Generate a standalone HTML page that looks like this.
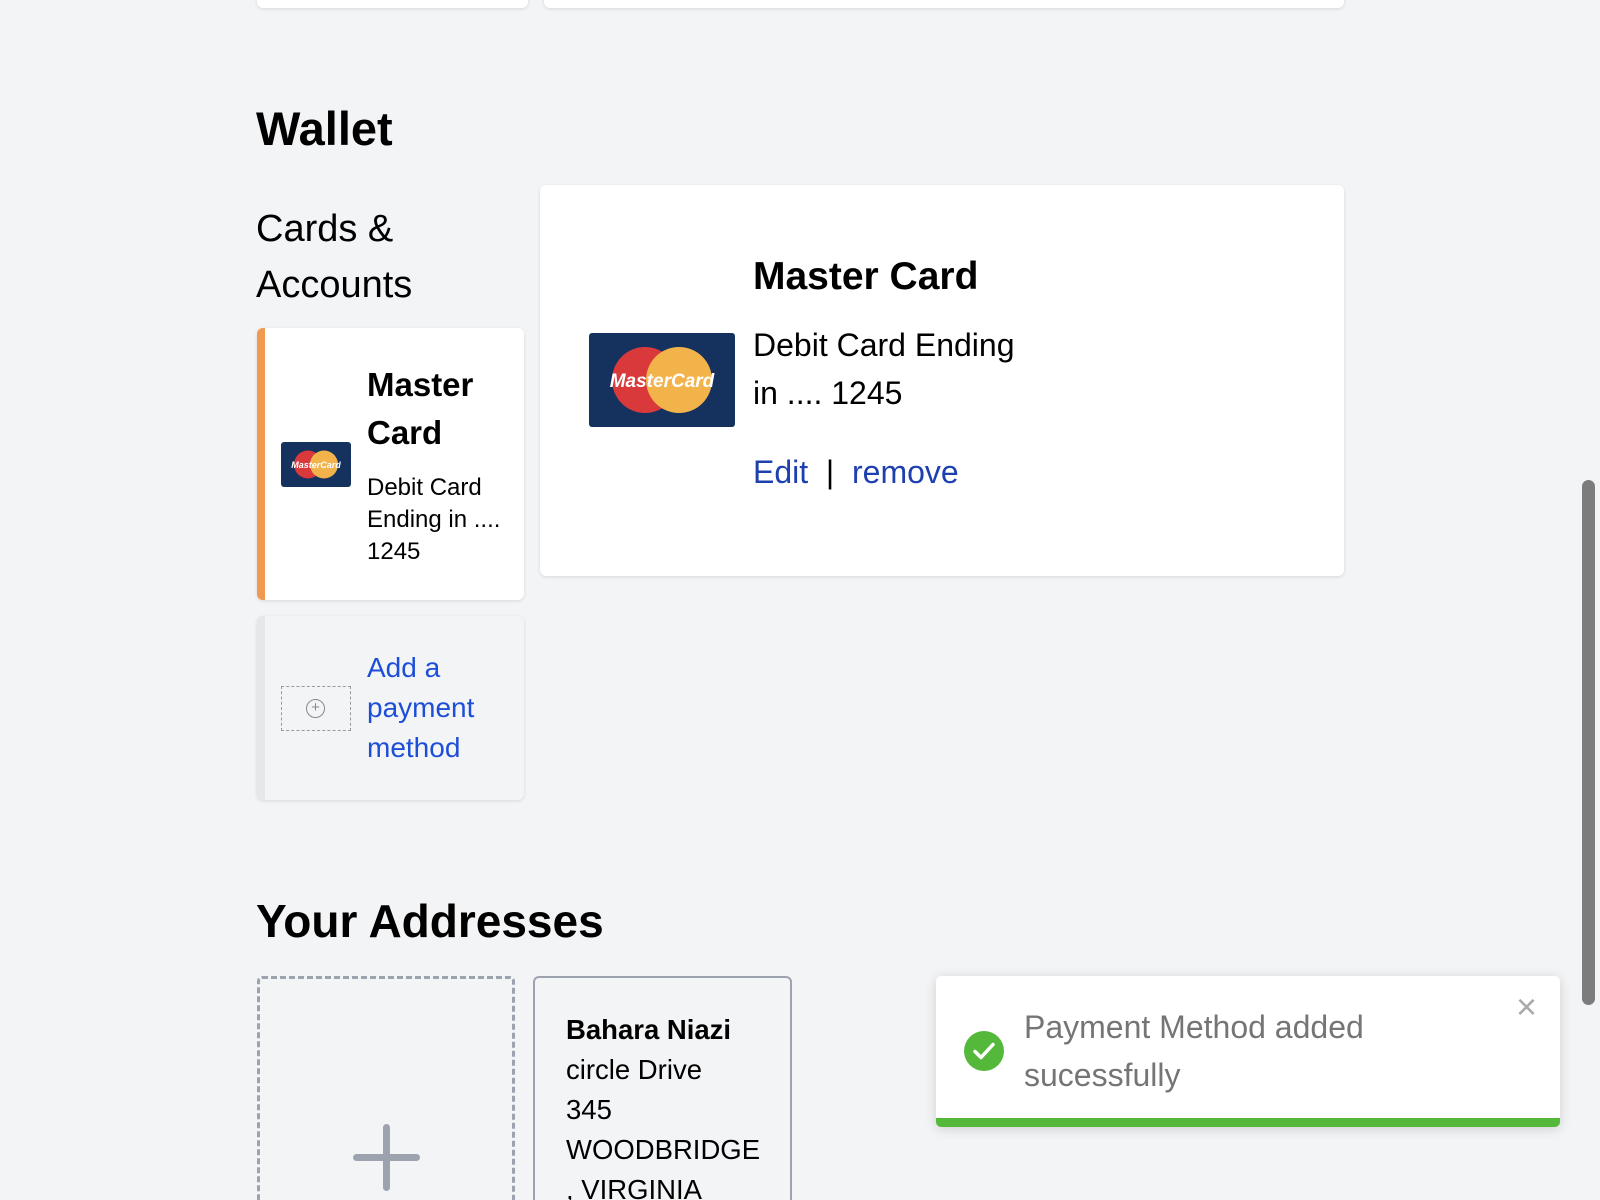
<!DOCTYPE html>
<html><head><meta charset="utf-8"><style>
*{box-sizing:border-box;margin:0;padding:0}
html,body{width:1600px;height:1200px;overflow:hidden}
body{background:#f3f4f6;font-family:"Liberation Sans",sans-serif;color:#000}
#w{position:relative;width:1600px;height:1200px;overflow:hidden}
.a{position:absolute}
.card{background:#fff;border-radius:6px;box-shadow:0 1px 3px rgba(0,0,0,.12)}
.mc{background:#15325f;border-radius:3px;overflow:hidden}
</style></head><body><div id="w">
<div class="a card" style="left:257px;top:-10px;width:271px;height:18px"></div>
<div class="a card" style="left:544px;top:-10px;width:800px;height:18px"></div>

<div class="a" style="left:256px;top:98px;font-size:47px;font-weight:bold;line-height:62px">Wallet</div>
<div class="a" style="left:256px;top:201px;font-size:38px;line-height:56px;width:270px">Cards &amp;<br>Accounts</div>

<div class="a card" style="left:257px;top:328px;width:267px;height:272px;border-left:8px solid #f09a4f"></div>
<div class="a mc" style="left:281px;top:442px;width:70px;height:45px">
<svg width="70" height="45" viewBox="0 0 70 45"><circle cx="27" cy="22.5" r="14" fill="#d9393b"/><circle cx="43" cy="22.5" r="14" fill="#f2b34b"/><text x="35" y="26" font-family="Liberation Sans" font-size="9" font-style="italic" font-weight="bold" fill="#fff" text-anchor="middle">MasterCard</text></svg></div>
<div class="a" style="left:367px;top:361px;font-size:33px;font-weight:bold;line-height:48px">Master<br>Card</div>
<div class="a" style="left:367px;top:472px;font-size:24px;line-height:32px;width:155px">Debit Card<br>Ending in ....<br>1245</div>

<div class="a card" style="left:257px;top:616px;width:267px;height:184px;background:#f3f4f6;border-left:8px solid #e5e7eb"></div>
<div class="a" style="left:281px;top:686px;width:70px;height:45px;border:1.5px dashed #999"></div>
<div class="a" style="left:306px;top:699px;width:19px;height:19px;border:1.5px solid #888;border-radius:50%;font-size:15px;line-height:16px;text-align:center;color:#888">+</div>
<div class="a" style="left:367px;top:648px;font-size:28px;line-height:40px;color:#1d4ed8">Add a<br>payment<br>method</div>

<div class="a card" style="left:540px;top:185px;width:804px;height:391px"></div>
<div class="a mc" style="left:589px;top:333px;width:146px;height:94px">
<svg width="146" height="94" viewBox="0 0 146 94"><circle cx="56" cy="47" r="33" fill="#d9393b"/><circle cx="90" cy="47" r="33" fill="#f2b34b"/><text x="73" y="54" font-family="Liberation Sans" font-size="19" font-style="italic" font-weight="bold" fill="#fff" text-anchor="middle">MasterCard</text></svg></div>
<div class="a" style="left:753px;top:253px;font-size:39px;font-weight:bold;line-height:48px">Master Card</div>
<div class="a" style="left:753px;top:321px;font-size:32px;line-height:48px">Debit Card Ending<br>in .... 1245</div>
<div class="a" style="left:753px;top:452px;font-size:32px;line-height:40px"><span style="color:#1e40af">Edit</span> &nbsp;| &nbsp;<span style="color:#1e40af">remove</span></div>

<div class="a" style="left:256px;top:892px;font-size:46px;font-weight:bold;line-height:58px">Your Addresses</div>
<div class="a" style="left:257px;top:976px;width:258px;height:224px;border:3px dashed #9ca3af;border-bottom:0;border-radius:5px 5px 0 0"></div>
<div class="a" style="left:353px;top:1154px;width:67px;height:7px;background:#9ca3af;border-radius:4px"></div>
<div class="a" style="left:383px;top:1124px;width:7px;height:67px;background:#9ca3af;border-radius:4px"></div>
<div class="a" style="left:533px;top:976px;width:259px;height:224px;border:2px solid #9ca3af;border-bottom:0;border-radius:6px 6px 0 0"></div>
<div class="a" style="left:566px;top:1010px;font-size:27.5px;line-height:40px"><b>Bahara Niazi</b><br>circle Drive<br>345<br>WOODBRIDGE<br>, VIRGINIA</div>

<div class="a" style="left:1582px;top:480px;width:13px;height:525px;background:#7c7c7c;border-radius:7px"></div>

<div class="a" style="left:936px;top:976px;width:624px;height:151px;background:#fff;border-radius:5px;box-shadow:0 2px 12px rgba(0,0,0,.15);overflow:hidden">
<div class="a" style="left:0;bottom:0;width:100%;height:9px;background:#54b93a"></div>
<div class="a" style="left:28px;top:55px;width:40px;height:40px;border-radius:50%;background:#54b93a">
<svg width="40" height="40" viewBox="0 0 40 40"><path d="M11 20.5l6 6 12-13" stroke="#fff" stroke-width="3.5" fill="none" stroke-linecap="round" stroke-linejoin="round"/></svg></div>
<div class="a" style="left:88px;top:27px;font-size:32px;line-height:48px;color:#757575">Payment Method added<br>sucessfully</div>
<div class="a" style="left:580px;top:14px;font-size:36px;color:#aaa;line-height:34px">×</div>
</div>
</div></body></html>
